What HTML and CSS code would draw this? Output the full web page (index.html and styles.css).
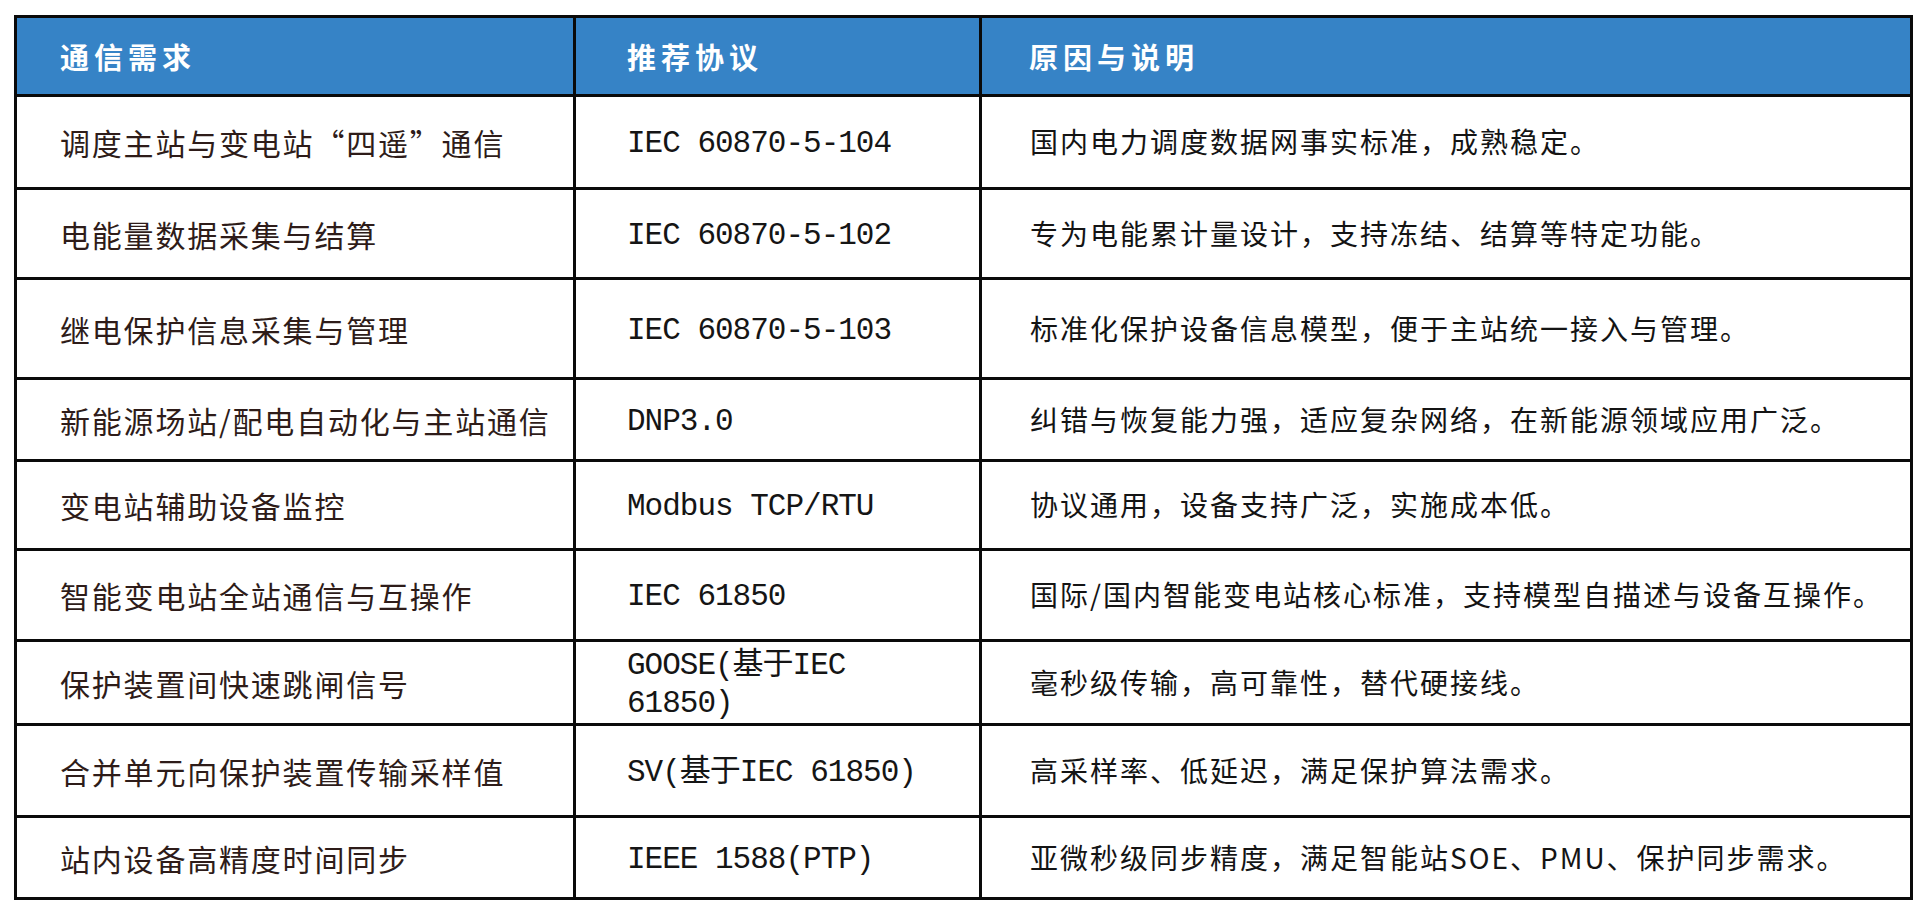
FILE: index.html
```html
<!DOCTYPE html>
<html lang="zh-CN">
<head>
<meta charset="utf-8">
<title>通信需求与推荐协议</title>
<link rel="stylesheet" href="styles.css">
</head>
<body>
<div class="page">
<table class="proto">
  <colgroup>
    <col class="c1"><col class="c2"><col class="c3">
  </colgroup>
  <thead>
    <tr class="head">
      <th class="h1">通信需求</th>
      <th class="h2">推荐协议</th>
      <th class="h3">原因与说明</th>
    </tr>
  </thead>
  <tbody>
    <tr class="row r1"><td class="need">调度主站与变电站“四遥”通信</td><td class="proto-name">IEC 60870-5-104</td><td class="why">国内电力调度数据网事实标准，成熟稳定。</td></tr>
    <tr class="row r2"><td class="need">电能量数据采集与结算</td><td class="proto-name">IEC 60870-5-102</td><td class="why">专为电能累计量设计，支持冻结、结算等特定功能。</td></tr>
    <tr class="row r3"><td class="need">继电保护信息采集与管理</td><td class="proto-name">IEC 60870-5-103</td><td class="why">标准化保护设备信息模型，便于主站统一接入与管理。</td></tr>
    <tr class="row r4"><td class="need">新能源场站/配电自动化与主站通信</td><td class="proto-name">DNP3.0</td><td class="why">纠错与恢复能力强，适应复杂网络，在新能源领域应用广泛。</td></tr>
    <tr class="row r5"><td class="need">变电站辅助设备监控</td><td class="proto-name">Modbus TCP/RTU</td><td class="why">协议通用，设备支持广泛，实施成本低。</td></tr>
    <tr class="row r6"><td class="need">智能变电站全站通信与互操作</td><td class="proto-name">IEC 61850</td><td class="why">国际/国内智能变电站核心标准，支持模型自描述与设备互操作。</td></tr>
    <tr class="row r7"><td class="need">保护装置间快速跳闸信号</td><td class="proto-name">GOOSE(基于IEC 61850)</td><td class="why">毫秒级传输，高可靠性，替代硬接线。</td></tr>
    <tr class="row r8"><td class="need">合并单元向保护装置传输采样值</td><td class="proto-name">SV(基于IEC 61850)</td><td class="why">高采样率、低延迟，满足保护算法需求。</td></tr>
    <tr class="row r9"><td class="need">站内设备高精度时间同步</td><td class="proto-name">IEEE 1588(PTP)</td><td class="why">亚微秒级同步精度，满足智能站SOE、PMU、保护同步需求。</td></tr>
  </tbody>
</table>
</div>
</body>
</html>
```

FILE: styles.css
```css
html, body {
  margin: 0;
  padding: 0;
  background: #ffffff;
}

.page {
  padding: 15px 0 0 14px;
}

.proto {
  border-collapse: collapse;
  table-layout: fixed;
  width: 1896px;
  font-family: "Noto Sans CJK SC", "Noto Sans", sans-serif;
}

.c1 { width: 559px; }
.c2 { width: 406px; }
.c3 { width: 931px; }

.proto th,
.proto td {
  border: 3px solid #0a0a0a;
  vertical-align: middle;
  text-align: left;
}

.head {
  height: 79px;
}

.proto .head th {
  background: #3683c6;
  color: #ffffff;
  font-weight: 700;
  font-size: 29px;
  letter-spacing: 5px;
  line-height: 1.2;
  padding-top: 0;
  padding-bottom: 0;
}

.proto .h1 { padding-left: 43px; }
.proto .h2 { padding-left: 51px; }
.proto .h3 { padding-left: 47px; }

.r1 { height: 93px; }
.r2 { height: 90px; }
.r3 { height: 100px; }
.r4 { height: 82px; }
.r5 { height: 89px; }
.r6 { height: 91px; }
.r7 { height: 84px; }
.r8 { height: 92px; }
.r9 { height: 82px; }

.proto .need {
  padding: 0 10px 0 43px;
  font-size: 30px;
  letter-spacing: 1.8px;
  color: #2e1c19;
  line-height: 1.2;
}

.proto .proto-name {
  padding: 4px 40px 0 51px;
  font-family: "Liberation Mono", "Noto Sans CJK SC", monospace;
  font-size: 31px;
  letter-spacing: -1px;
  color: #151515;
  line-height: 1.2;
}

.proto .why {
  padding: 0 10px 0 48px;
  font-size: 28px;
  letter-spacing: 2px;
  color: #141414;
  line-height: 1.2;
}
```
